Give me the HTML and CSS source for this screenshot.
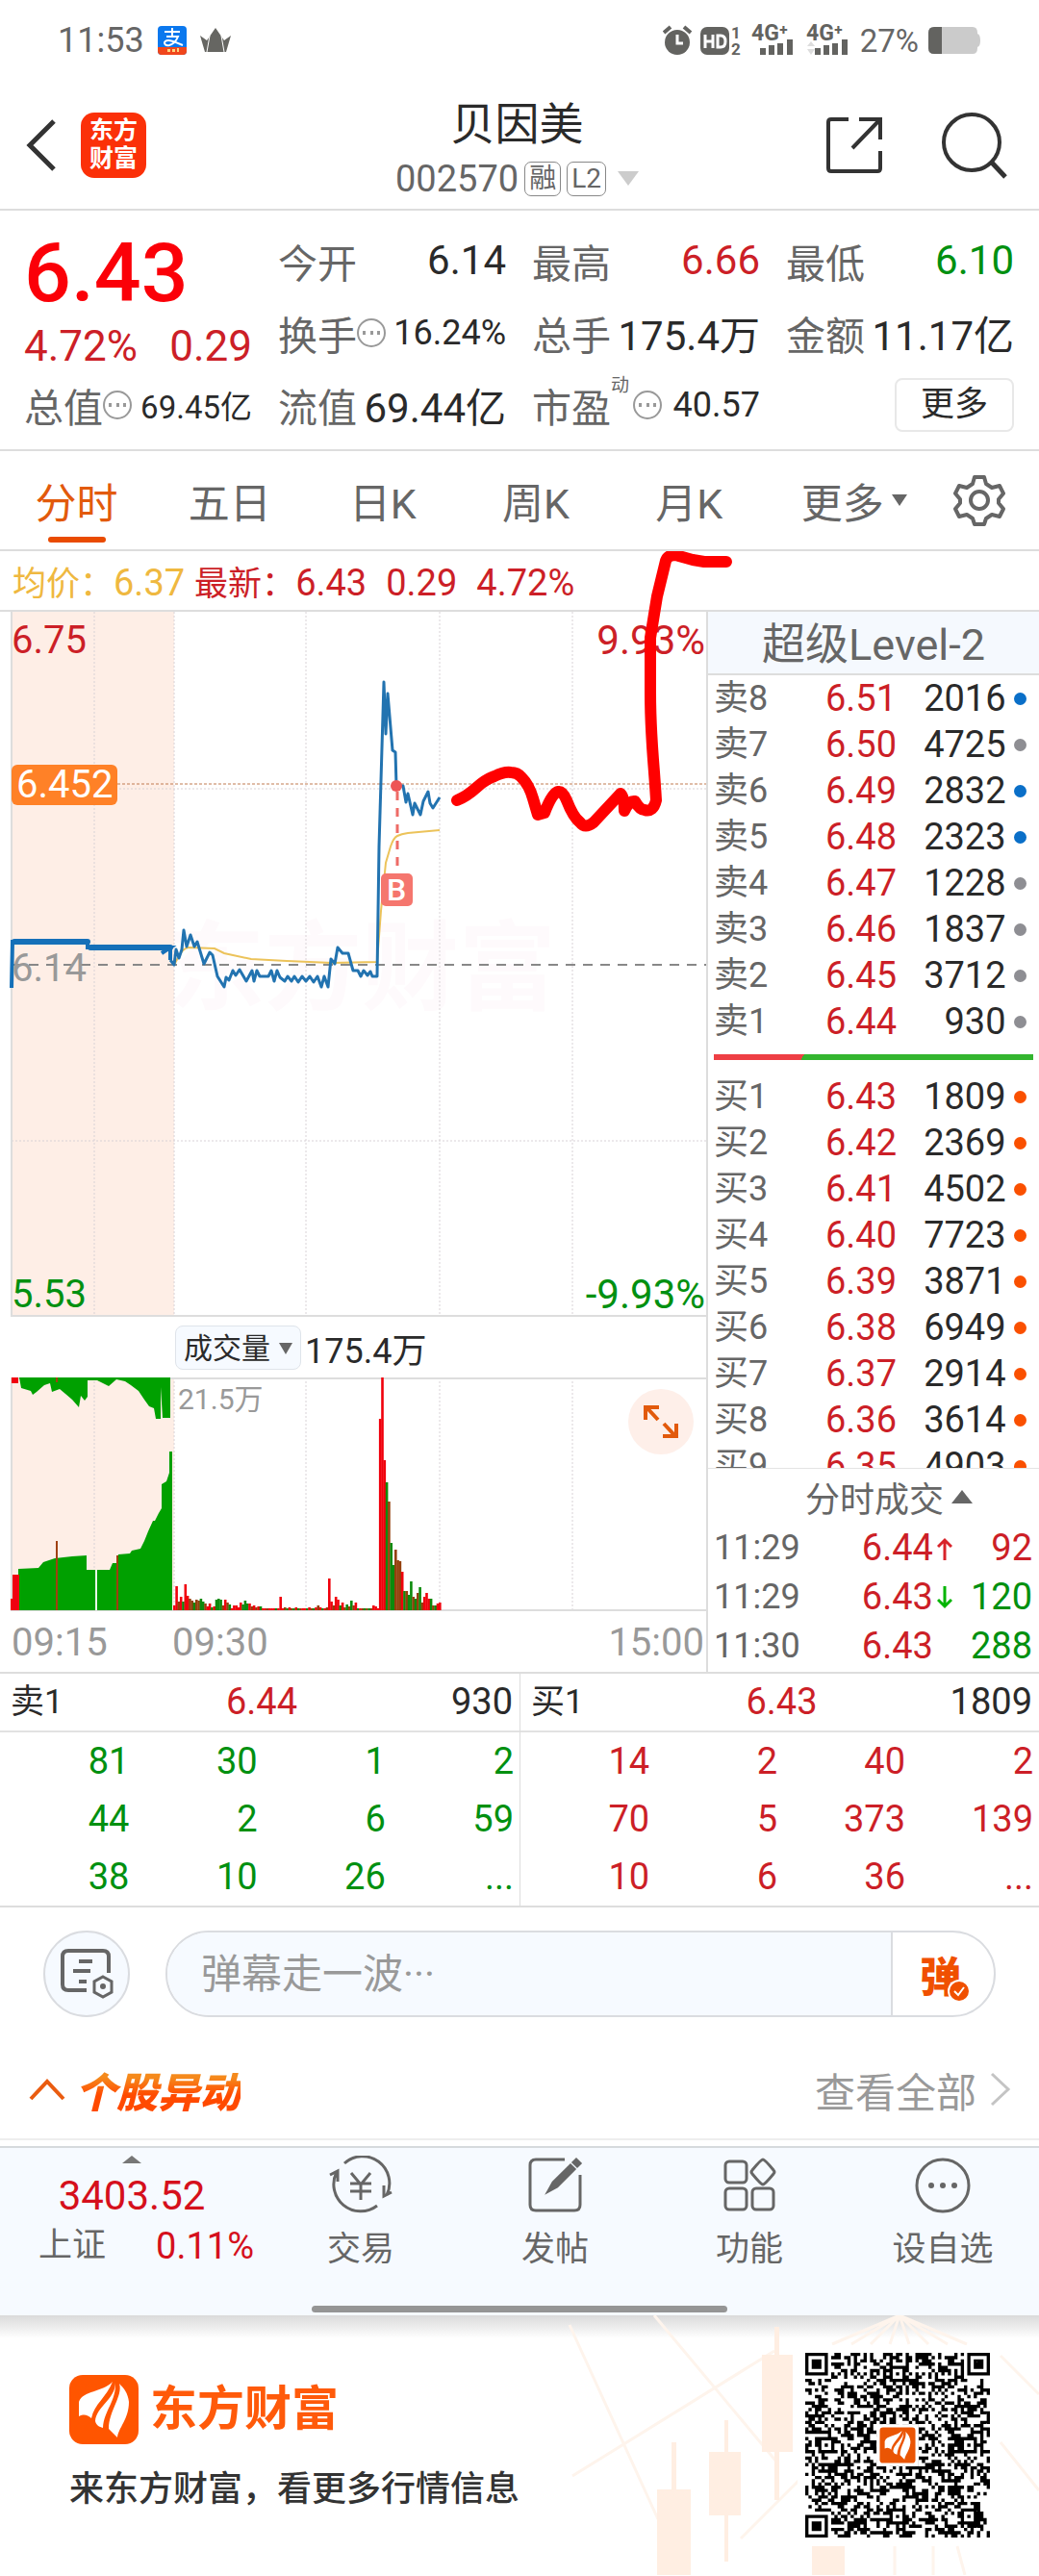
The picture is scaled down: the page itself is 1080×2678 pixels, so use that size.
FILE: index.html
```html
<!DOCTYPE html>
<html lang="zh-CN">
<head>
    <meta charset="UTF-8">
    <meta name="viewport" content="width=device-width">
    <title>贝因美 002570</title>
    <link rel="stylesheet" href="styles.css">
</head>
<body>
<div class="status">
    <span class="time">11:53</span>
    <svg class="status-left" width="80" height="34" viewBox="0 0 80 34">
        <rect x="0" y="2" width="30" height="30" rx="4" fill="#0b78ee"/>
        <path d="M0 24h30v4a4 4 0 0 1-4 4H4a4 4 0 0 1-4-4z" fill="#f0461c"/>
        <path d="M7 8h16M15 4v8M9 13h12c-2 5-5 8-9 9-6 1-7-5-1-5 5 0 9 3 15 5" fill="none" stroke="#fff" stroke-width="2"/>
        <path d="M10 26h3v3h-3zM15 26h3v3h-3zM20 25h2v4h-2z" fill="#ffd27a"/>
        <path d="M44 12l7 5 9-13 9 13 7-5-5 17H49z" fill="#666662"/>
        <path d="M54 12l-3 17M66 12l3 17" stroke="#fff" stroke-width="1"/>
    </svg>
    <svg class="status-right" width="196" height="52" viewBox="0 -8 196 52">
        <circle cx="15" cy="20" r="13" fill="#636360"/>
        <path d="M1 10l7-6M29 10l-7-6" stroke="#636360" stroke-width="4"/>
        <path d="M15 12v9h6" fill="none" stroke="#fff" stroke-width="3"/>
        <rect x="39" y="4" width="30" height="29" rx="7" fill="#636360"/>
        <path d="M44 12v14M52 12v14M44 19h8M57 13v12h3q5 0 5-6t-5-6z" fill="none" stroke="#fff" stroke-width="3"/>
        <text x="71" y="16" class="st-num">1</text>
        <text x="71" y="33" class="st-num">2</text>
        <text x="92" y="18" class="st-net">4G⁺</text>
        <path d="M104 26v7M113 23v10M122 21v12M132 17v16" stroke="#636360" stroke-width="6"/>
        <text x="149" y="18" class="st-net">4G⁺</text>
        <path d="M161 26v7M170 23v10M179 21v12M189 17v16" stroke="#636360" stroke-width="6"/>
        <path d="M150 24l4-5 4 5zM150 27l4 6 4-6z" fill="#ddd"/>
    </svg>
    <span class="power">27%</span>
    <svg width="54" height="28" viewBox="0 0 54 28">
        <path d="M6 0h40q5 0 5 6v1q3 1 3 7t-3 7v1q0 6-5 6H6q-6 0-6-6V6q0-6 6-6z" fill="#cbcbcb"/>
        <path d="M14 0H6Q0 0 0 6v16q0 6 6 6h8z" fill="#636360"/>
    </svg>
</div>

<header class="header">
    <div class="side">
        <button class="plain" aria-label="返回">
            <svg width="32" height="56" viewBox="0 0 32 56"><path d="M29 3L4 28l25 25" fill="none" stroke="#333" stroke-width="5"/></svg>
        </button>
        <div class="app-logo">东方<br>财富</div>
    </div>
    <div class="title">
        <h1>贝因美</h1>
        <div class="code">002570<i>融</i><i>L2</i><b></b></div>
    </div>
    <div class="side tools">
        <button class="plain" aria-label="分享">
            <svg width="60" height="60" viewBox="0 0 60 60"><path d="M24 3H6q-3 0-3 3v48q0 3 3 3h48q3 0 3-3V36M35 3h22v21M57 3L28 33" fill="none" stroke="#333" stroke-width="4"/></svg>
        </button>
        <button class="plain" aria-label="搜索">
            <svg width="70" height="70" viewBox="0 0 70 70"><circle cx="32" cy="32" r="29" fill="none" stroke="#333" stroke-width="4"/><path d="M53 53l14 15" stroke="#333" stroke-width="5"/></svg>
        </button>
    </div>
</header>

<section class="quote">
    <div class="now-price">
        <div class="price red">6.43</div>
        <div class="change red2"><em>4.72%</em><em>0.29</em></div>
    </div>
    <div class="cell"><span>今开</span><em>6.14</em></div>
    <div class="cell"><span>最高</span><em class="red2">6.66</em></div>
    <div class="cell"><span>最低</span><em class="green">6.10</em></div>
    <div class="cell"><span>换手</span><i class="tip"></i><em class="mid">16.24%</em></div>
    <div class="cell"><span>总手</span><em>175.4万</em></div>
    <div class="cell"><span>金额</span><em>11.17亿</em></div>
    <div class="cell"><span>总值</span><i class="tip"></i><em class="small">69.45亿</em></div>
    <div class="cell"><span>流值</span><em>69.44亿</em></div>
    <div class="cell pe"><span>市盈<sup>动</sup></span><i class="tip"></i><em class="mid">40.57</em></div>
    <div class="cell"><button class="more">更多</button></div>
</section>

<nav class="tabs">
    <button class="current">分时</button>
    <button>五日</button>
    <button>日K</button>
    <button>周K</button>
    <button>月K</button>
    <button>更多<small></small></button>
    <button aria-label="设置">
        <svg width="54" height="54" viewBox="0 0 54 54" fill="none" stroke="#666" stroke-width="4">
            <path d="M22 3h10l2 7 6 4 8-2 4 8-5 6v4l5 6-4 8-8-2-6 4-2 6H22l-2-6-6-4-8 2-4-8 5-6v-4l-5-6 4-8 8 2 6-4z" stroke-linejoin="round"/>
            <circle cx="27" cy="27" r="9"/>
        </svg>
    </button>
</nav>

<main class="trend">
    <div class="legend">
        <span class="avg">均价：<b>6.37</b></span><span>最新：<b>6.43</b><b>0.29</b><b>4.72%</b></span>
    </div>
    <div class="panels">
        <div class="left">
            <div class="chart">
                <svg viewBox="0 636 734 733">
                    <rect x="12" y="636" width="169" height="733" fill="#feeee6"/>
                    <text x="174" y="1042" class="watermark">东方财富</text>
                    <path d="M98 636v733M181 636v733M318 636v733M457 636v733M595 636v733M12 820h722M12 1186h722" class="grid"/>
                    <path d="M12 636v733M12 1368h722" stroke="#ddd" stroke-width="2"/>
                    <path d="M12 815h722" stroke="#c07a50" stroke-width="1" stroke-dasharray="3 2"/>
                    <path d="M12 1003h722" stroke="#888" stroke-width="2" stroke-dasharray="10 8"/>
                    <path d="M181 1003L186 994Q190 986 196 985L223 986 233 991 261 997 298 999 345 1001 392 1000 396 947 401 897 406 880Q409 871 413 869T424 866L457 863" fill="none" stroke="#ecc35a" stroke-width="2"/>
                    <path d="M12 1027L13 979H91V985H177L168 991M177 985V998" fill="none" stroke="#1570b8" stroke-width="4"/>
                    <path d="M15 979h76M94 985h83" stroke="#1570b8" stroke-width="6" stroke-linecap="round"/>
                    <path d="M177 998L181 1003 183 987 186 996 189 987 191 967 194 984 198 972 202 984 205 979 212 1002 218 990 221 993 226 1015 233 1026 235 1016 238 1019 242 1009 245 1014 249 1008 256 1020 262 1009 264 1020 267 1009 270 1015 279 1015 282 1009 285 1020 288 1009 291 1016 296 1020 299 1015 303 1020 306 1015 310 1021 314 1015 318 1020 322 1015 326 1021 330 1015 334 1026 337 1015 341 1026 344 997 348 1002 351 985 356 991 362 991 367 1009 372 1009 375 1015 378 1009 382 1014 385 1010 387 1015 392 1015 394 880 399 709 401 763 403 721 408 780 411 782 412 817 419 817 422 834 424 825 429 847 431 835 437 847 440 833 445 823 447 835 450 840 457 829" fill="none" stroke="#2273b0" stroke-width="3" stroke-linejoin="round"/>
                    <path d="M413 823v84" stroke="#ee6b66" stroke-width="3" stroke-dasharray="9 8"/>
                    <circle cx="412" cy="817" r="6" fill="#ee5555"/>
                    <rect x="396" y="908" width="33" height="34" rx="5" fill="#f5766e"/>
                    <text x="412" y="936" class="buy">B</text>
                </svg>
                <span class="mark top red2">6.75</span>
                <span class="mark top end red2">9.93%</span>
                <span class="mark now">6.452</span>
                <span class="mark base">6.14</span>
                <span class="mark bottom green">5.53</span>
                <span class="mark bottom end green">-9.93%</span>
            </div>
            <div class="vol-head">
                <label class="vol-type"><select aria-label="指标"><option>成交量</option></select></label>
                <span>175.4万</span>
            </div>
            <div class="chart">
                <svg viewBox="0 1432 734 243">
                    <rect x="12" y="1432" width="169" height="243" fill="#feeee6"/>
                    <path d="M98 1432v243M181 1432v243M318 1432v243M457 1432v243M595 1432v243" class="grid"/>
                    <path d="M12 1433h722M12 1674h722M12 1432v243" stroke="#ddd" stroke-width="2"/>
                    <path d="M20 1432L22 1443 32 1446 34 1450 38 1447 46 1440 52 1438 54 1447 62 1444 68 1449 75 1455 82 1463 84 1451 88 1456 91 1452V1435H101L113 1441 121 1434 130 1436 136 1440 144 1446 150 1455 155 1462 160 1464 162 1475H167V1442L169 1474H177V1432z" fill="#00a000"/>
                    <path d="M19 1674V1631L40 1630 45 1624 57 1620 75 1618 90 1617V1632H114L117 1625H121L123 1616 135 1615 137 1612 146 1610 150 1602 154 1592 159 1581H161L165 1573 168 1568V1543L173 1540 176 1531V1509H179V1674z" fill="#00a000"/>
                    <path d="M12 1432h7v6h-7zM11 1662h2v-25h7v37h-9z" fill="#f00010"/>
                    <path d="M59 1602v72M59 1432v5M122 1617v57" stroke="#a04010" stroke-width="2"/>
                    <path d="M100 1632v42" stroke="#e8f8e8" stroke-width="2"/>
                    <g id="bars"></g>
                </svg>
                <span class="mark vol-max">21.5万</span>
                <button class="expand" aria-label="全屏">
                    <svg width="36" height="36" viewBox="0 0 36 36" fill="none" stroke="#e25a0c" stroke-width="4"><path d="M2 16V3h14M3 3l12 13M34 20v13H20M33 33L21 20"/></svg>
                </button>
            </div>
            <div class="times"><span>09:15</span><span>09:30</span><span>15:00</span></div>
        </div>

        <aside class="right">
            <h2>超级Level-2</h2>
            <div class="book">
                <table>
                    <tr><th>卖8</th><td>6.51</td><td>2016</td><td><i class="blue"></i></td></tr>
                    <tr><th>卖7</th><td>6.50</td><td>4725</td><td><i></i></td></tr>
                    <tr><th>卖6</th><td>6.49</td><td>2832</td><td><i class="blue"></i></td></tr>
                    <tr><th>卖5</th><td>6.48</td><td>2323</td><td><i class="blue"></i></td></tr>
                    <tr><th>卖4</th><td>6.47</td><td>1228</td><td><i></i></td></tr>
                    <tr><th>卖3</th><td>6.46</td><td>1837</td><td><i></i></td></tr>
                    <tr><th>卖2</th><td>6.45</td><td>3712</td><td><i></i></td></tr>
                    <tr><th>卖1</th><td>6.44</td><td>930</td><td><i></i></td></tr>
                </table>
                <div class="ratio"></div>
                <table>
                    <tr><th>买1</th><td>6.43</td><td>1809</td><td><i class="orange"></i></td></tr>
                    <tr><th>买2</th><td>6.42</td><td>2369</td><td><i class="orange"></i></td></tr>
                    <tr><th>买3</th><td>6.41</td><td>4502</td><td><i class="orange"></i></td></tr>
                    <tr><th>买4</th><td>6.40</td><td>7723</td><td><i class="orange"></i></td></tr>
                    <tr><th>买5</th><td>6.39</td><td>3871</td><td><i class="orange"></i></td></tr>
                    <tr><th>买6</th><td>6.38</td><td>6949</td><td><i class="orange"></i></td></tr>
                    <tr><th>买7</th><td>6.37</td><td>2914</td><td><i class="orange"></i></td></tr>
                    <tr><th>买8</th><td>6.36</td><td>3614</td><td><i class="orange"></i></td></tr>
                    <tr><th>买9</th><td>6.35</td><td>4903</td><td><i class="orange"></i></td></tr>
                </table>
            </div>
            <h3>分时成交<b></b></h3>
            <table class="deals">
                <tr><th>11:29</th><td>6.44</td><td><svg width="16" height="24" viewBox="0 0 16 24"><path d="M8 24V3M1 10l7-7 7 7" fill="none" stroke="#d8232a" stroke-width="3"/></svg></td><td>92</td></tr>
                <tr><th>11:29</th><td>6.43</td><td><svg width="16" height="24" viewBox="0 0 16 24"><path d="M8 0v21M1 14l7 7 7-7" fill="none" stroke="#00b400" stroke-width="3"/></svg></td><td class="green">120</td></tr>
                <tr><th>11:30</th><td>6.43</td><td></td><td class="green">288</td></tr>
            </table>
        </aside>
    </div>
    <!-- 手绘走势 -->
    <svg class="sketch" viewBox="0 573 1080 300">
        <path d="M475 832Q485 828 495 819T514 807Q524 802 531 803 538 803 542 808 550 816 554 830L559 847 566 845Q574 824 580 823 585 822 589 832 596 850 603 855 608 862 617 855L645 825Q649 828 649 843 654 832 660 833 665 842 670 842 679 845 682 832 681 815 679 790 676 750 676 720L676 663 683 620 692 583Q694 577 702 577L720 582 732 584 755 584" fill="none" stroke="#ff0000" stroke-width="12" stroke-linecap="round" stroke-linejoin="round"/>
    </svg>
</main>

<section class="queues">
    <div class="queue">
        <div class="queue-head"><span>卖1</span><span class="red2">6.44</span><span>930</span></div>
        <table class="green">
            <tr><td>81</td><td>30</td><td>1</td><td>2</td></tr>
            <tr><td>44</td><td>2</td><td>6</td><td>59</td></tr>
            <tr><td>38</td><td>10</td><td>26</td><td>...</td></tr>
        </table>
    </div>
    <div class="queue">
        <div class="queue-head"><span>买1</span><span class="red2">6.43</span><span>1809</span></div>
        <table class="red2">
            <tr><td>14</td><td>2</td><td>40</td><td>2</td></tr>
            <tr><td>70</td><td>5</td><td>373</td><td>139</td></tr>
            <tr><td>10</td><td>6</td><td>36</td><td>...</td></tr>
        </table>
    </div>
</section>

<section class="barrage">
    <button class="note" aria-label="弹幕设置">
        <svg width="56" height="56" viewBox="0 0 56 56" fill="none" stroke="#666" stroke-width="4">
            <path d="M28 45H9q-6 0-6-6V10q0-6 6-6h36q6 0 6 6v17M20 15h14M14 25h18M20 36h8"/>
            <path d="M45 31l9 5v11l-9 5-9-5V36z" stroke-width="3"/><circle cx="45" cy="41" r="3" fill="#666" stroke="none"/>
        </svg>
    </button>
    <div class="say">
        <input type="text" aria-label="弹幕" placeholder="弹幕走一波···">
        <button aria-label="弹幕开关"><b>弹</b>
            <svg width="24" height="24" viewBox="0 0 24 24"><circle cx="12" cy="12" r="11" fill="#f05000" stroke="#fff" stroke-width="2"/><path d="M7 12l4 4 6-8" fill="none" stroke="#fff" stroke-width="2"/></svg>
        </button>
    </div>
</section>

<section class="moves">
    <svg width="38" height="24" viewBox="0 0 38 24"><path d="M2 22L19 4l17 18" fill="none" stroke="#ea5c10" stroke-width="4"/></svg>
    <h2>个股异动</h2>
    <a href="#">查看全部<svg width="22" height="36" viewBox="0 0 22 36"><path d="M2 2l17 16L2 34" fill="none" stroke="#c4c4c4" stroke-width="3"/></svg></a>
</section>

<nav class="dock">
    <a href="#" class="index">
        <i></i>
        <b>3403.52</b>
        <span>上证<em>0.11%</em></span>
    </a>
    <a href="#">
        <svg width="66" height="60" viewBox="0 0 66 60" fill="none" stroke="#666" stroke-width="3">
            <path d="M16 8A28 28 0 0 1 60 41M50 52A28 28 0 0 1 8 17M1 20l8-4v11M65 38l-8 4V31"/>
            <path d="M23 18l10 12 10-12M33 30v16M22 29h22M22 37h22"/>
        </svg>
        交易
    </a>
    <a href="#">
        <svg width="60" height="60" viewBox="0 0 60 60" fill="none" stroke="#666" stroke-width="3">
            <path d="M40 4H10q-6 0-6 6v41q0 6 6 6h40q6 0 6-6V20"/>
            <path d="M23 37l5-9 18-18 4 4-18 18zM49 7l3-3 4 4-3 3z" fill="#666"/>
        </svg>
        发帖
    </a>
    <a href="#">
        <svg width="56" height="60" viewBox="0 0 56 60" fill="none" stroke="#666" stroke-width="3">
            <rect x="3" y="6" width="22" height="22" rx="4"/><rect x="3" y="34" width="22" height="22" rx="4"/><rect x="31" y="34" width="22" height="22" rx="4"/>
            <path d="M42 4q2 0 11 11 2 2 0 4-9 11-11 11t-11-11q-2-2 0-4Q40 4 42 4z"/>
        </svg>
        功能
    </a>
    <a href="#">
        <svg width="60" height="60" viewBox="0 0 60 60"><circle cx="30" cy="31" r="27" fill="none" stroke="#666" stroke-width="3"/><circle cx="18" cy="31" r="3" fill="#666"/><circle cx="30" cy="31" r="3" fill="#666"/><circle cx="42" cy="31" r="3" fill="#666"/></svg>
        设自选
    </a>
    <div class="home-bar"></div>
</nav>

<footer class="promo">
    <svg class="candles" viewBox="580 2408 500 270" preserveAspectRatio="xMaxYMin slice">
        <path d="M592 2418l92 202M595 2575l210-130M680 2408l127 152M770 2640l70-70M935 2408l-70 30M935 2408l-50 30M935 2408l-30 30M935 2408l-10 30M935 2408l10 30M935 2408l30 30M935 2408l50 30M935 2408l70 30M1040 2450l40 40M1040 2540l40 50M930 2648v30M970 2648v30M995 2648l8 30" stroke="#fef4ec" stroke-width="3"/>
        <path d="M792 2449h32v101h-32zM805 2420h5v180h-5zM737 2550h33v66h-33zM753 2517h4v147h-4zM683 2589h35v89h-35zM698 2540h5v50h-5zM844 2648h34v30h-34z" fill="#ffeee2"/>
    </svg>
    <div class="brand">
        <div class="logo-line">
            <svg width="72" height="72" viewBox="0 0 72 72"><rect width="72" height="72" rx="14" fill="#ff5500"/><use href="#wing"/></svg>
            <strong>东方财富</strong>
        </div>
        <p>来东方财富，看更多行情信息</p>
    </div>
    <svg class="qr" width="192" height="192" viewBox="0 0 57 57">
        <path id="qr" fill="#000"/>
        <rect x="22" y="22" width="13" height="13" fill="#fff"/>
        <rect x="23" y="23" width="11" height="11" rx="1" fill="#ea5504"/>
        <svg x="23" y="23" width="11" height="11" viewBox="0 0 72 72">
            <g id="wing" fill="#fff">
                <path d="M45 7C35 18 14 16 10 28v15c6-3 9-1 13 2 3-15 16-22 22-38z"/>
                <path d="M48 8c0 17-20 25-21 40 1 4 4 6 8 7 1-18 14-28 13-47z"/>
                <path d="M52 9c4 13-11 28-11 47l9 9c1-10 12-19 12-37-1-9-5-14-10-19z"/>
            </g>
        </svg>
    </svg>
</footer>
<script src="main.js"></script>
</body>
</html>
```
FILE: styles.css
```css
body,h1,h2,h3,p,table,button,input {
    margin: 0;
    padding: 0;
}
* {
    box-sizing: border-box;
}
body {
    background: #fff;
    color: #2a2a2a;
    font-family: Roboto, "Noto Sans CJK SC", sans-serif;
    font-size: 38px;
}
button,input,select {
    font: inherit;
    color: inherit;
    border: 0;
    background: none;
}
i,em {
    font-style: normal;
}
b,h1,h2,h3,th {
    font-weight: normal;
}
a {
    color: inherit;
    text-decoration: none;
}
svg {
    display: block;
    flex-shrink: 0;
}
table {
    width: 100%;
    border-collapse: collapse;
    table-layout: fixed;
}
td,th {
    padding: 0;
    text-align: right;
}
.red {
    color: #fb0008;
}
.red2 {
    color: #cc1f27;
}
.green {
    color: #009010;
}

/* 状态栏 */
.status {
    display: flex;
    align-items: center;
    height: 84px;
    padding: 0 61px 0 60px;
    color: #666;
}
.time {
    width: 104px;
    font-size: 36px;
}
.status-right {
    margin-left: auto;
}
.st-num {
    font-size: 17px;
    font-weight: bold;
    fill: #636360;
}
.st-net {
    font-size: 23px;
    font-weight: bold;
    fill: #636360;
}
.power {
    margin: 0 10px 0 9px;
    font-size: 33px;
}

/* 标题 */
.header {
    display: grid;
    grid-template-columns: 1fr auto 1fr;
    align-items: center;
    height: 135px;
    padding: 0 32px 0 27px;
    border-bottom: 2px solid #ddd;
}
.side {
    display: flex;
    align-items: center;
    gap: 25px;
}
.tools {
    justify-content: flex-end;
    gap: 60px;
}
.app-logo {
    width: 68px;
    height: 68px;
    padding-top: 4px;
    border-radius: 14px;
    background: #fb3008;
    color: #fff;
    font-size: 25px;
    font-weight: bold;
    line-height: 29px;
    text-align: center;
}
.title {
    text-align: center;
    padding-top: 10px;
}
.title h1 {
    font-size: 46px;
    line-height: 60px;
}
.code {
    display: flex;
    align-items: center;
    gap: 6px;
    height: 54px;
    color: #666;
}
.code i {
    height: 36px;
    padding: 0 4px;
    border: 1px solid #888;
    border-radius: 7px;
    font-size: 28px;
    line-height: 34px;
}
.code b {
    margin-left: 6px;
    border: 11px solid transparent;
    border-top: 15px solid #ccc;
    border-bottom: 0;
}

/* 行情 */
.quote {
    display: grid;
    grid-template-columns: repeat(4, 1fr);
    grid-auto-rows: 75px;
    column-gap: 27px;
    height: 250px;
    padding: 14px 26px 0 25px;
    border-bottom: 2px solid #ddd;
    font-size: 42px;
}
.now-price {
    grid-row: span 2;
}
.price {
    font-size: 86px;
    font-weight: 500;
    line-height: 102px;
}
.change {
    display: flex;
    justify-content: space-between;
    font-size: 44px;
    line-height: 50px;
}
.cell {
    display: flex;
    align-items: center;
    white-space: nowrap;
}
.cell span {
    position: relative;
    font-size: 41px;
    color: #666;
}
.cell em {
    margin-left: auto;
}
.cell .mid {
    font-size: 36px;
}
.cell .small {
    font-size: 33px;
}
.tip {
    width: 30px;
    height: 30px;
    border: 2px solid #999;
    border-radius: 50%;
    background: radial-gradient(circle, #999 2px, transparent 2px) center / 7px 26px no-repeat, radial-gradient(circle, #999 2px, transparent 2px) 2px center / 7px 26px no-repeat, radial-gradient(circle, #999 2px, transparent 2px) 17px center / 7px 26px no-repeat;
}
.cell sup {
    position: absolute;
    left: 100%;
    top: 0;
    font-size: 19px;
    line-height: 20px;
}
.pe .tip {
    margin-left: 23px;
}
.more {
    width: 124px;
    height: 56px;
    margin-left: auto;
    border: 2px solid #e8e8e8;
    border-radius: 8px;
    font-size: 35px;
    line-height: 50px;
}

/* 周期 */
.tabs {
    display: grid;
    grid-template-columns: 159fr 159fr 159fr 159fr 159fr 184fr 76fr;
    height: 104px;
    padding-right: 24px;
    border-bottom: 2px solid #ddd;
    font-size: 43px;
    color: #666;
}
.tabs button {
    display: flex;
    align-items: center;
    justify-content: center;
    position: relative;
}
.tabs .current {
    color: #e25a0c;
}
.tabs .current::after {
    content: "";
    position: absolute;
    bottom: 7px;
    width: 60px;
    height: 6px;
    border-radius: 3px;
    background: #e94b00;
}
.tabs small {
    margin-left: 8px;
    border: 8px solid transparent;
    border-top: 12px solid #666;
    border-bottom: 0;
}

/* 分时图 */
.trend {
    position: relative;
}
.legend {
    display: flex;
    height: 63px;
    padding-left: 13px;
    border-bottom: 2px solid #ddd;
    font-size: 35px;
    line-height: 66px;
    color: #cc1f27;
}
.legend b {
    margin-right: 20px;
    font-size: 38px;
}
.legend .avg {
    color: #efb840;
}
.legend .avg b {
    margin-right: 10px;
}
.sketch {
    position: absolute;
    left: 0;
    top: 0;
    width: 100%;
    pointer-events: none;
}
.panels {
    display: grid;
    grid-template-columns: 734fr 346fr;
    border-bottom: 2px solid #ddd;
}
.left {
    min-width: 0;
}
.chart {
    position: relative;
}
.grid {
    stroke: #d8d2d6;
    stroke-width: 1;
    stroke-dasharray: 2 2;
}
.watermark {
    font-size: 101px;
    font-weight: bold;
    fill: #fefafc;
}
.buy {
    font-size: 32px;
    font-weight: 500;
    fill: #fff;
    text-anchor: middle;
}
.mark {
    position: absolute;
    left: 12px;
    font-size: 40px;
    line-height: 42px;
}
.end {
    left: auto;
    right: 1px;
    font-size: 42px;
}
.top {
    top: 9px;
}
.now {
    top: 159px;
    padding: 0 5px;
    border-radius: 6px;
    background: #ff8127;
    color: #fff;
}
.base {
    top: 350px;
    color: #999;
}
.bottom {
    bottom: 2px;
}
.vol-head {
    display: flex;
    align-items: center;
    gap: 4px;
    height: 63px;
    padding-left: 182px;
    font-size: 36px;
}
.vol-type {
    position: relative;
    width: 131px;
    height: 46px;
    border: 1px solid #dfe4ea;
    border-radius: 8px;
    background: #f6faff;
}
.vol-type::after {
    content: "";
    position: absolute;
    right: 8px;
    top: 17px;
    border: 7px solid transparent;
    border-top: 12px solid #666;
    border-bottom: 0;
}
.vol-type select {
    width: 100%;
    height: 100%;
    padding-left: 8px;
    font-size: 30px;
    appearance: none;
}
.vol-max {
    left: 185px;
    top: 2px;
    color: #999;
    font-size: 30px;
}
.expand {
    position: absolute;
    right: 13px;
    top: 12px;
    width: 68px;
    height: 68px;
    padding: 16px;
    border-radius: 50%;
    background: #feefe9;
}
.times {
    display: grid;
    grid-template-columns: 167px auto 1fr;
    padding: 3px 2px 0 12px;
    color: #999;
    font-size: 40px;
    line-height: 60px;
}
.times span:last-child {
    text-align: right;
}

/* 盘口 */
.right {
    border-left: 2px solid #ddd;
}
.right h2 {
    height: 66px;
    border-bottom: 2px solid #ddd;
    background: #f5f9fe;
    color: #666;
    font-size: 45px;
    line-height: 69px;
    text-align: center;
}
.book {
    height: 825px;
    overflow: hidden;
    border-bottom: 1px solid #e4e4e4;
}
.book tr {
    height: 48px;
    line-height: 48px;
}
.book th,.deals th {
    width: 27%;
    padding-left: 6px;
    text-align: left;
    color: #666;
    font-size: 36px;
}
.book td:nth-child(2) {
    width: 30%;
    color: #cc1f27;
}
.book td:nth-child(3) {
    width: 33%;
}
.book i {
    display: block;
    width: 13px;
    height: 13px;
    margin-left: 8px;
    border-radius: 50%;
    background: #8e8e93;
}
.book .blue {
    background: #0a6fc8;
}
.book .orange {
    background: #fa5000;
}
.ratio {
    height: 6px;
    margin: 10px 6px 14px;
    background: linear-gradient(120deg, #ee3f44 28%, #33b52f 28%);
}
.right h3 {
    display: flex;
    align-items: center;
    justify-content: center;
    gap: 8px;
    height: 57px;
    padding-left: 32px;
    color: #666;
    font-size: 36px;
}
.right h3 b {
    border: 11px solid transparent;
    border-bottom: 14px solid #666;
    border-top: 0;
}
.deals tr {
    height: 51px;
    line-height: 51px;
    color: #cc1f27;
}
.deals th {
    width: 33%;
}
.deals td:nth-child(2) {
    width: 35%;
}
.deals td:nth-child(3) {
    width: 8%;
    padding-left: 4px;
}
.deals td:last-child {
    padding-right: 7px;
}
.deals .green {
    color: #009010;
}

/* 买卖队列 */
.queues {
    display: grid;
    grid-template-columns: 1fr 1fr;
    border-bottom: 2px solid #ddd;
}
.queue + .queue {
    border-left: 1px solid #ddd;
}
.queue-head {
    display: grid;
    grid-template-columns: 1fr 1fr 1fr;
    padding: 0 7px 0 11px;
    border-bottom: 2px solid #e2e2e2;
    font-size: 38px;
    line-height: 59px;
}
.queue-head span:first-child {
    font-size: 35px;
}
.queue-head span:nth-child(2) {
    text-align: center;
}
.queue-head span:last-child {
    text-align: right;
}
.queue tr {
    height: 60px;
    line-height: 60px;
}
.queue td {
    padding-right: 6px;
}
.queue td:first-child {
    width: 26%;
}

/* 弹幕 */
.barrage {
    display: flex;
    gap: 37px;
    padding: 24px 45px;
}
.note {
    display: grid;
    place-items: center;
    width: 90px;
    height: 90px;
    border: 2px solid #dadce0;
    border-radius: 50%;
    background: #f6faff;
}
.say {
    display: flex;
    flex: 1;
    height: 90px;
    border: 2px solid #dadce0;
    border-radius: 45px;
    overflow: hidden;
}
.say input {
    flex: 1;
    min-width: 0;
    padding-left: 35px;
    background: #f6faff;
    font-size: 42px;
}
.say input::placeholder {
    color: #999;
}
.say button {
    position: relative;
    width: 107px;
    padding-right: 6px;
    border-left: 2px solid #dadce0;
    color: #f05000;
}
.say button b {
    font-size: 43px;
    font-weight: 900;
}
.say button svg {
    position: absolute;
    left: 57px;
    top: 49px;
}

.moves {
    display: flex;
    align-items: center;
    height: 104px;
    padding: 0 29px 0 30px;
    border-bottom: 2px solid #eee;
}
.moves h2 {
    margin-left: 10px;
    background: linear-gradient(#f58a1c 30%, #ff4a00 60%);
    background-clip: text;
    -webkit-background-clip: text;
    color: transparent;
    font-size: 43px;
    font-weight: 900;
    font-style: italic;
}
.moves a {
    display: flex;
    align-items: center;
    gap: 14px;
    margin-left: auto;
    color: #999;
    font-size: 42px;
}

/* 底部导航 */
.dock {
    display: grid;
    grid-template-columns: 274fr 202fr 202fr 202fr 200fr;
    position: relative;
    height: 176px;
    margin-top: 6px;
    border-top: 2px solid #d6dadd;
    background: #f6faff;
    color: #666;
    font-size: 35px;
}
.dock a {
    display: flex;
    flex-direction: column;
    align-items: center;
    padding-top: 8px;
    line-height: 76px;
}
.dock .index {
    line-height: 52px;
}
.index i {
    border: 10px solid transparent;
    border-bottom: 8px solid #777;
    border-top: 0;
}
.index b {
    margin-top: 8px;
    color: #d5101c;
    font-size: 42px;
}
.index span {
    display: flex;
    gap: 52px;
    padding-left: 30px;
}
.index em {
    color: #d5101c;
    font-size: 38px;
}
.home-bar {
    position: absolute;
    left: 30%;
    right: 30%;
    bottom: 3px;
    height: 7px;
    border-radius: 4px;
    background: #959595;
}

.promo {
    display: flex;
    align-items: center;
    justify-content: space-between;
    position: relative;
    height: 270px;
    padding: 0 51px 0 72px;
    background: linear-gradient(#dadada, #fff 24px);
}
.candles {
    position: absolute;
    right: 0;
    top: 0;
    width: 500px;
    height: 270px;
}
.brand {
    position: relative;
}
.logo-line {
    display: flex;
    align-items: center;
    gap: 12px;
    color: #ff5a0a;
    font-size: 49px;
    line-height: 72px;
}
.brand p {
    margin-top: 20px;
    color: #333;
    font-size: 36px;
    font-weight: 500;
    line-height: 54px;
}
.qr {
    position: relative;
    outline: 8px solid #fff;
    background: #fff;
}
```
FILE: main.js
```javascript
// 成交量柱子，每根 [高度, 颜色]  r 红 g 绿 m 暗红
var vols = '5r25r9m14r9g27r15r12m10m8g11m10m12g9g7m4r7r3g4r11g12g11g5m11r8m6g2r5r5r3r8r6g10g7g7r4m5r3m4r4g2r2r2m2r2r2r2g2r14r2r3m2g3r2m2g3r2g2m2r2r2g3r2m2g3r5m3r2g2r3m33r9r5m14r11r5g8r3m6g4m10g5m8r2g2r2m2g2m2g2m5r4r2r199r242r156r133g113m70g47g63m52m51m40r20g20m16g30g14m12g18m24g8m14r18r12r12g5m5g7r8r';
var colors = {r: '#f0000c', g: '#0c8a0c', m: '#94400c'};
var html = '';
vols.match(/\d+[rgm]/g).forEach(function (v, i) {
    var h = parseInt(v);
    var x = 180 + i * 2.3;
    html += '<rect x="' + x + '" y="' + (1674 - h) + '" width="2.6" height="' + h + '" fill="' + colors[v.slice(-1)] + '"/>';
});
document.getElementById('bars').innerHTML = html;

// 二维码
var n = 57, seed = 2570, d = '';
function ring(x, y, size) {
    // 定位点: 外圈和中心是黑的
    var r = Math.max(Math.abs(x), Math.abs(y));
    return size === 3 ? r !== 2 : r !== 1;
}
for (var y = 0; y < n; y++) {
    for (var x = 0; x < n; x++) {
        seed = (seed * 1103515245 + 12345) % 2147483648;
        var on = seed / 2147483648 > 0.5;
        if (x < 8 && y < 8) on = x < 7 && y < 7 && ring(x - 3, y - 3, 3);
        else if (x > 48 && y < 8) on = x > 49 && y < 7 && ring(x - 53, y - 3, 3);
        else if (x < 8 && y > 48) on = x < 7 && y > 49 && ring(x - 3, y - 53, 3);
        else if (x === 6 || y === 6) on = (x + y) % 2 === 0;
        [[6, 28], [28, 6], [28, 50], [50, 28], [50, 50]].forEach(function (p) {
            if (Math.abs(x - p[0]) < 3 && Math.abs(y - p[1]) < 3) on = ring(x - p[0], y - p[1], 2);
        });
        if (on) d += 'M' + x + ' ' + y + 'h1v1h-1z';
    }
}
document.getElementById('qr').setAttribute('d', d);
```
